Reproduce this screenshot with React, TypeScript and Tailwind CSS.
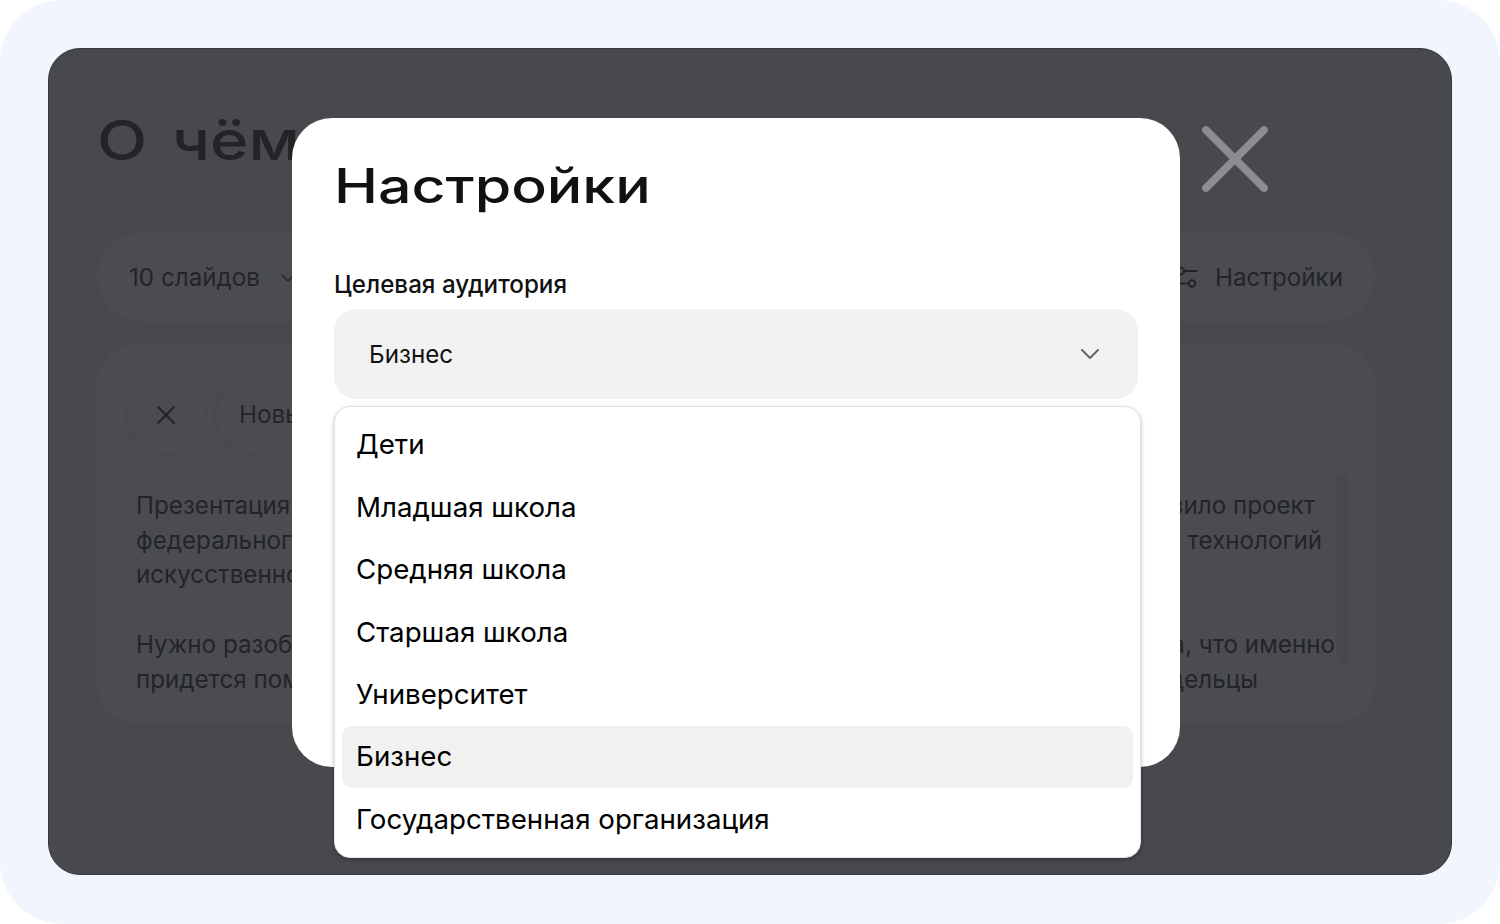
import { ChevronDown, X } from "lucide-react";

const audiences = ["Дети", "Младшая школа", "Средняя школа", "Старшая школа", "Университет", "Бизнес", "Государственная организация"];

function TextLine({ left, right, rightClass }: { left: string; right: string; rightClass: string }) {
  return (
    <div className="flex justify-between whitespace-nowrap">
      <span>{left}</span>
      <span className={rightClass}>{right}</span>
    </div>
  );
}

function SettingsIcon() {
  return (
    <svg width="26" height="26" viewBox="0 0 26 26" fill="none" stroke="currentColor" strokeWidth="2" strokeLinecap="round">
      <circle cx="9" cy="6" r="3.2" />
      <path d="M12.5 6H25M2 6h3.5M2 18.5h14.5" />
      <circle cx="20" cy="18.5" r="3.2" />
    </svg>
  );
}

export default function App() {
  return (
    <div className="h-[924px] w-[1500px] overflow-hidden bg-white font-[family-name:Inter,sans-serif]">
      <div className="h-full rounded-[62px] bg-[#f1f6fe] px-12 pt-12">
        <div className="relative h-[827px] rounded-[32px] border border-[#36373a] bg-[#48494c] pt-[58px] pr-[76px] pl-12 text-[#232428]">
          <h1 className="h-[67px] origin-left scale-x-[1.19] text-[55px] leading-[66px] font-[450] whitespace-nowrap [word-spacing:6px]">О чём</h1>

          <div className="mt-[59px] flex h-[89px] items-center justify-between rounded-[45px] bg-[#4b4c50] px-8 pt-[2px] text-[24.2px]">
            <div className="flex items-center gap-4">
              <span>10 слайдов</span>
              <ChevronDown className="size-6" strokeWidth={1.5} />
            </div>
            <div className="flex items-center gap-[17px]">
              <SettingsIcon />
              <span>Настройки</span>
            </div>
          </div>

          <div className="relative mt-[22px] h-[380px] rounded-[40px] bg-[#4b4c50] pt-[29px] pr-10 pl-[39px] text-[24.2px] leading-[34.7px]">
            <div className="-ml-[12px] flex items-center gap-[5px]">
              <div className="flex size-[84px] items-center justify-center rounded-full border-4 border-[#494a4d]">
                <X className="size-8" strokeWidth={1.5} />
              </div>
              <div className="flex h-[84px] w-[300px] items-center rounded-full border-4 border-[#494a4d] pl-[22px]">Новые технологии</div>
            </div>
            <div className="mt-[32px]">
              <TextLine left="Презентация" right="вило проект" rightClass="mr-[20px]" />
              <TextLine left="федерального" right="технологий" rightClass="mr-[13px]" />
              <TextLine left="искусственного" right="" rightClass="" />
              <div className="h-[34.7px]" />
              <TextLine left="Нужно разобрать" right="а, что именно" rightClass="" />
              <TextLine left="придется пом" right="дельцы" rightClass="mr-[77px]" />
            </div>
            <div className="absolute top-[131px] right-[27px] h-[190px] w-[11px] rounded-full bg-[#47484b]" />
          </div>

          <div className="absolute top-[69px] left-[243px] h-[649px] w-[888px] rounded-[40px] bg-white px-[42px] pt-[32px] text-black">
            <h2 className="h-[72px] origin-left scale-x-[1.23] text-[48px] leading-[72px] font-[450] whitespace-nowrap text-[#111]">Настройки</h2>
            <div className="mt-[46px] text-[24.2px] leading-[34px] font-medium text-[#111]">Целевая аудитория</div>
            <div className="relative mt-[7px] w-[804px]">
              <div className="flex h-[90px] items-center justify-between rounded-[22px] bg-[#f2f2f2] pt-[2px] pr-[32px] pl-[35px] text-[24.2px] text-[#111]">
                <span>Бизнес</span>
                <ChevronDown className="-mt-[2px] size-8 text-[#666]" strokeWidth={1.5} />
              </div>
              <div className="absolute top-[97px] left-0 w-[807px] rounded-[16px] border border-[#e2e2e2] bg-white px-[7px] pt-[7px] pb-[6px] shadow-[0_2px_4px_rgba(0,0,0,0.25)]">
                {audiences.map((item) => (
                  <div
                    key={item}
                    className={item === "Бизнес" ? "flex h-[62.4px] items-center rounded-[10px] bg-[#f1f1f1] pl-[14px] text-[27.7px]" : "flex h-[62.4px] items-center pl-[14px] text-[27.7px]"}
                  >
                    {item}
                  </div>
                ))}
              </div>
            </div>
          </div>

          <X className="absolute top-[52px] left-[1128px] size-[116px] text-[#8c8d8f]" strokeWidth={1.6} />
        </div>
      </div>
    </div>
  );
}
